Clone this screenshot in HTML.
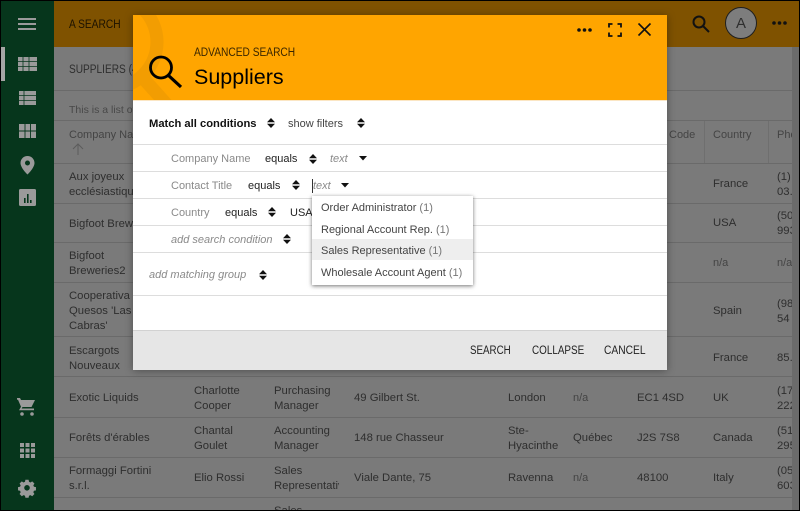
<!DOCTYPE html>
<html><head><meta charset="utf-8"><style>
html,body{margin:0;padding:0}
body{width:800px;height:511px;overflow:hidden;position:relative;background:#000;font-family:"Liberation Sans",sans-serif;font-size:11px;color:#333}
div,span,svg{position:absolute;box-sizing:border-box}
#page{left:1px;top:1px;width:798px;height:509px;overflow:hidden;background:#7a7a7a}
.t{white-space:nowrap;line-height:15px;transform:translateY(1px);transform-origin:left center}
.bg{color:#2e2e2e;font-size:11.3px}
.hl{height:1px;background:#6a6a6a}
.d{font-size:11px;color:#222;white-space:nowrap;line-height:15px;transform:translateY(1px);transform-origin:left center}
.g{color:#8a8a8a}
.i{font-style:italic;color:#8a8a8a}
.l{height:1px;background:#ddd;left:0;width:534px}
.m{font-size:11px;color:#444;left:9px;white-space:nowrap;line-height:15px;transform:translateY(1px)}
</style></head><body>
<div id="page">
<div style="left:0;top:0;width:53px;height:509px;background:#06361c"></div>
<div style="left:53px;top:0;width:745px;height:46px;background:#7f5200"></div>
<div style="left:0;top:46px;width:4px;height:34px;background:#a5a5a5"></div>

<svg style="left:0;top:0" width="53" height="509" fill="#9a9a9a">
<rect x="17" y="17" width="18" height="2"/><rect x="17" y="22" width="18" height="2"/><rect x="17" y="27" width="18" height="2"/>
<path d="M17 56h19v14H17z"/><path d="M22 56v14M28 56v14M17 60.500h19M17 65.500h19" stroke="#06361c" stroke-width=".8" fill="none"/>
<path d="M18 90h17v14H18z"/><path d="M23 90v14M18 94.500h17M18 99.500h17" stroke="#06361c" stroke-width=".8" fill="none"/>
<path d="M18 123h17v14H18z"/><path d="M24 123v14M29.500 123v14M18 130h17" stroke="#06361c" stroke-width=".9" fill="none"/>
<path d="M26.500 155c-3.900 0-7 3.100-7 7 0 5 7 11.500 7 11.500s7-6.500 7-11.500c0-3.900-3.100-7-7-7zm0 9.500a2.500 2.500 0 110-5 2.500 2.500 0 010 5z" fill-rule="evenodd"/>
<rect x="18" y="188" width="17" height="17" rx="1.500"/><path d="M23 197h1.600v5H23zM26 193h1.600v9H26zM29 199h1.600v3H29z" fill="#06361c"/>
<path d="M16 397h3l1 2h14l-3.500 7H21.500l-.8 1.500H33v1.800H18l2-3.500-3-7H16z"/><circle cx="21" cy="413" r="1.800"/><circle cx="31" cy="413" r="1.800"/>
<path d="M19 442h4v4h-4zM24.500 442h4v4h-4zM30 442h4v4h-4zM19 447.500h4v4h-4zM24.500 447.500h4v4h-4zM30 447.500h4v4h-4zM19 453h4v4h-4zM24.500 453h4v4h-4zM30 453h4v4h-4z"/>
<path transform="translate(26 488) scale(.8) translate(-26 -490.500)" fill-rule="evenodd" d="M24 479h4l.5 2.500 1.800.8 2.200-1.400 2.800 2.800-1.400 2.200.8 1.800 2.500.5v4l-2.500.5-.8 1.800 1.400 2.200-2.800 2.800-2.200-1.400-1.800.8-.5 2.500h-4l-.5-2.500-1.800-.8-2.200 1.400-2.800-2.800 1.400-2.200-.8-1.800-2.500-.5v-4l2.500-.5.8-1.800-1.400-2.200 2.800-2.800 2.200 1.400 1.800-.8zM26 485.500a3.500 3.500 0 100 7 3.500 3.500 0 000-7z"/>
</svg>

<div class="t" style="left:68px;top:15px;font-size:12px;color:#1c1200;transform:translateY(1px) scaleX(.85)">A SEARCH</div>
<svg style="left:690px;top:12px" width="20" height="22" fill="none" stroke="#111" stroke-width="2"><circle cx="8" cy="9" r="5.500"/><path d="M12 13l6 6"/></svg>
<div style="left:724px;top:6px;width:32px;height:32px;border-radius:50%;background:#7d7d7d;border:1px solid #1f1f1f"></div>
<div class="t" style="left:724px;top:14px;width:32px;text-align:center;font-size:15px;color:#2e2e2e">A</div>
<svg style="left:770px;top:19px" width="18" height="6" fill="#111"><circle cx="3" cy="3" r="1.800"/><circle cx="8.500" cy="3" r="1.800"/><circle cx="14" cy="3" r="1.800"/></svg>

<div class="t bg" style="left:68px;top:61px;font-size:11.500px;transform:translateY(1px) scaleX(.88)">SUPPLIERS (4)</div>
<div class="hl" style="left:53px;top:89px;width:739px"></div>
<div class="t" style="left:68px;top:101px;font-size:10.500px;color:#484848">This is a list of</div>
<div class="hl" style="left:53px;top:119px;width:739px"></div>
<div class="t" style="left:68px;top:126px;color:#444">Company Name</div>
<svg style="left:70px;top:141px" width="14" height="14" fill="none" stroke="#5c5c5c" stroke-width="1"><path d="M7 2v11M2 7l5-5 5 5"/></svg>
<div class="t" style="left:668px;top:126px;color:#444">Code</div>
<div class="t" style="left:712px;top:126px;color:#444">Country</div>
<div class="t" style="left:776px;top:126px;color:#444;width:16px;overflow:hidden">Phone</div>
<div style="left:703px;top:120px;width:1px;height:43px;background:#6f6f6f"></div>
<div style="left:767px;top:120px;width:1px;height:43px;background:#6f6f6f"></div>
<div class="hl" style="left:53px;top:162px;width:739px"></div>
<div class="hl" style="left:53px;top:202px;width:739px"></div>
<div class="hl" style="left:53px;top:241px;width:739px"></div>
<div class="hl" style="left:53px;top:281px;width:739px"></div>
<div class="hl" style="left:53px;top:335px;width:739px"></div>
<div class="hl" style="left:53px;top:375px;width:739px"></div>
<div class="hl" style="left:53px;top:416px;width:739px"></div>
<div class="hl" style="left:53px;top:456px;width:739px"></div>
<div class="hl" style="left:53px;top:496px;width:739px"></div>

<div class="t bg" style="left:68px;top:168px">Aux joyeux<br>ecclésiastiques</div>
<div class="t bg" style="left:68px;top:215px">Bigfoot Breweries</div>
<div class="t bg" style="left:68px;top:247px">Bigfoot<br>Breweries2</div>
<div class="t bg" style="left:68px;top:287px">Cooperativa de<br>Quesos 'Las<br>Cabras'</div>
<div class="t bg" style="left:68px;top:342px">Escargots<br>Nouveaux</div>
<div class="t bg" style="left:68px;top:389px">Exotic Liquids</div>
<div class="t bg" style="left:68px;top:429px">Forêts d'érables</div>
<div class="t bg" style="left:68px;top:462px">Formaggi Fortini<br>s.r.l.</div>

<div class="t bg" style="left:193px;top:382px">Charlotte<br>Cooper</div>
<div class="t bg" style="left:193px;top:422px">Chantal<br>Goulet</div>
<div class="t bg" style="left:193px;top:469px">Elio Rossi</div>

<div class="t bg" style="left:273px;top:382px">Purchasing<br>Manager</div>
<div class="t bg" style="left:273px;top:422px">Accounting<br>Manager</div>
<div class="t bg" style="left:273px;top:462px;width:65px;overflow:hidden">Sales<br>Representative</div>
<div class="t bg" style="left:273px;top:502px">Sales</div>

<div class="t bg" style="left:353px;top:389px">49 Gilbert St.</div>
<div class="t bg" style="left:353px;top:429px">148 rue Chasseur</div>
<div class="t bg" style="left:353px;top:469px">Viale Dante, 75</div>

<div class="t bg" style="left:507px;top:389px">London</div>
<div class="t bg" style="left:507px;top:422px">Ste-<br>Hyacinthe</div>
<div class="t bg" style="left:507px;top:469px">Ravenna</div>

<div class="t" style="left:572px;top:389px;color:#444">n/a</div>
<div class="t bg" style="left:572px;top:429px">Québec</div>
<div class="t" style="left:572px;top:469px;color:#444">n/a</div>

<div class="t bg" style="left:636px;top:389px">EC1 4SD</div>
<div class="t bg" style="left:636px;top:429px">J2S 7S8</div>
<div class="t bg" style="left:636px;top:469px">48100</div>

<div class="t bg" style="left:712px;top:175px">France</div>
<div class="t bg" style="left:712px;top:214px">USA</div>
<div class="t" style="left:712px;top:254px;color:#444">n/a</div>
<div class="t bg" style="left:712px;top:302px">Spain</div>
<div class="t bg" style="left:712px;top:349px">France</div>
<div class="t bg" style="left:712px;top:389px">UK</div>
<div class="t bg" style="left:712px;top:429px">Canada</div>
<div class="t bg" style="left:712px;top:469px">Italy</div>

<div class="t bg" style="left:776px;top:168px;width:16px;overflow:hidden">(1)<br>03.8</div>
<div class="t bg" style="left:776px;top:207px;width:16px;overflow:hidden">(503)<br>993</div>
<div class="t" style="left:776px;top:254px;color:#444;width:16px;overflow:hidden">n/a</div>
<div class="t bg" style="left:776px;top:295px;width:16px;overflow:hidden">(98)<br>54</div>
<div class="t bg" style="left:776px;top:349px;width:16px;overflow:hidden">85.5</div>
<div class="t bg" style="left:776px;top:382px;width:16px;overflow:hidden">(171)<br>222</div>
<div class="t bg" style="left:776px;top:422px;width:16px;overflow:hidden">(514)<br>295</div>
<div class="t bg" style="left:776px;top:462px;width:16px;overflow:hidden">(054)<br>603</div>
<div style="left:791px;top:46px;width:7px;height:463px;background:#6b6b6b"></div>
</div>

<!-- dialog -->
<div style="left:133px;top:15px;width:534px;height:355px;background:#fff;box-shadow:0 1px 8px rgba(0,0,0,.35)">
  <div style="left:0;top:0;width:534px;height:85px;background:#ffa500;overflow:hidden">
    <svg style="left:-60px;top:-15px" width="140" height="110" fill="none" stroke="#f29d02" stroke-width="13"><circle cx="38" cy="42" r="46"/><path d="M70 78l34 38"/></svg>
    <svg style="left:14px;top:36px" width="38" height="40" fill="none" stroke="#000" stroke-width="2.800"><circle cx="14" cy="16.500" r="10.500"/><path d="M21.500 24.500l12.500 11.500" stroke-width="3.200"/></svg>
    <div class="t" style="left:61px;top:30px;font-size:11.500px;color:#3a2600;transform:translateY(1px) scaleX(.886)">ADVANCED SEARCH</div>
    <div class="t" style="left:61px;top:48px;font-size:21.500px;line-height:26px;color:#000">Suppliers</div>
    <svg style="left:443px;top:12px" width="18" height="6" fill="#111"><circle cx="3" cy="3" r="1.800"/><circle cx="8.500" cy="3" r="1.800"/><circle cx="14" cy="3" r="1.800"/></svg>
    <svg style="left:475px;top:8px" width="14" height="14" fill="none" stroke="#111" stroke-width="1.800"><path d="M1 4.500V1h3.500M9.500 1H13v3.500M13 9.500V13H9.500M4.500 13H1V9.500"/></svg>
    <svg style="left:504px;top:7px" width="15" height="15" fill="none" stroke="#111" stroke-width="1.600"><path d="M1.500 1.500l12 12M13.500 1.500l-12 12"/></svg>
  </div>
  <div style="left:0;top:85px;width:534px;height:1px;background:#fbe6c4"></div>
  <div class="d" style="left:16px;top:101px;font-weight:bold;font-size:11.200px;color:#111">Match all conditions</div>
  <svg style="left:134px;top:103px" width="8" height="10" fill="#111"><path d="M4 0l4 4.200H0zM4 10L0 5.800h8z"/></svg>
  <div class="d" style="left:155px;top:101px;color:#444">show filters</div>
  <svg style="left:224px;top:103px" width="8" height="10" fill="#111"><path d="M4 0l4 4.200H0zM4 10L0 5.800h8z"/></svg>
  <div class="l" style="top:129px"></div>

  <div class="d g" style="left:38px;top:136px">Company Name</div>
  <div class="d" style="left:132px;top:136px">equals</div>
  <svg style="left:176px;top:139px" width="8" height="10" fill="#111"><path d="M4 0l4 4.200H0zM4 10L0 5.800h8z"/></svg>
  <div class="d i" style="left:197px;top:136px">text</div>
  <svg style="left:226px;top:141px" width="8" height="5" fill="#111"><path d="M0 0h8L4 4.500z"/></svg>
  <div class="l" style="top:156px"></div>

  <div class="d g" style="left:38px;top:163px">Contact Title</div>
  <div class="d" style="left:115px;top:163px">equals</div>
  <svg style="left:159px;top:165px" width="8" height="10" fill="#111"><path d="M4 0l4 4.200H0zM4 10L0 5.800h8z"/></svg>
  <div style="left:179px;top:164px;width:1px;height:14px;background:#333"></div>
  <div class="d i" style="left:180px;top:163px">text</div>
  <svg style="left:208px;top:168px" width="8" height="5" fill="#111"><path d="M0 0h8L4 4.500z"/></svg>
  <div class="l" style="top:183px"></div>

  <div class="d g" style="left:38px;top:190px">Country</div>
  <div class="d" style="left:92px;top:190px">equals</div>
  <svg style="left:135px;top:192px" width="8" height="10" fill="#111"><path d="M4 0l4 4.200H0zM4 10L0 5.800h8z"/></svg>
  <div class="d" style="left:157px;top:190px">USA</div>
  <div class="l" style="top:210px"></div>

  <div class="d i" style="left:38px;top:217px">add search condition</div>
  <svg style="left:150px;top:219px" width="8" height="10" fill="#111"><path d="M4 0l4 4.200H0zM4 10L0 5.800h8z"/></svg>
  <div class="l" style="top:237px"></div>

  <div class="d i" style="left:16px;top:252px">add matching group</div>
  <svg style="left:126px;top:255px" width="8" height="10" fill="#111"><path d="M4 0l4 4.200H0zM4 10L0 5.800h8z"/></svg>
  <div class="l" style="top:280px"></div>

  <div style="left:179px;top:181px;width:161px;height:89px;background:#fff;box-shadow:0 1px 4px rgba(0,0,0,.55)">
    <div style="left:0;top:43px;width:161px;height:21px;background:#eee"></div>
    <div class="m" style="top:4px">Order Administrator <span style="position:static;color:#777">(1)</span></div>
    <div class="m" style="top:26px">Regional Account Rep. <span style="position:static;color:#777">(1)</span></div>
    <div class="m" style="top:47px">Sales Representative <span style="position:static;color:#777">(1)</span></div>
    <div class="m" style="top:69px">Wholesale Account Agent <span style="position:static;color:#777">(1)</span></div>
  </div>

  <div style="left:0;top:315px;width:534px;height:40px;background:#e6e6e6;border-top:1px solid #d2d2d2"></div>
  <div class="d" style="left:337px;top:328px;color:#222;font-size:11.500px;transform:translateY(1px) scaleX(.85)">SEARCH</div>
  <div class="d" style="left:399px;top:328px;color:#222;font-size:11.500px;transform:translateY(1px) scaleX(.86)">COLLAPSE</div>
  <div class="d" style="left:471px;top:328px;color:#222;font-size:11.500px;transform:translateY(1px) scaleX(.89)">CANCEL</div>
</div>
</body></html>
